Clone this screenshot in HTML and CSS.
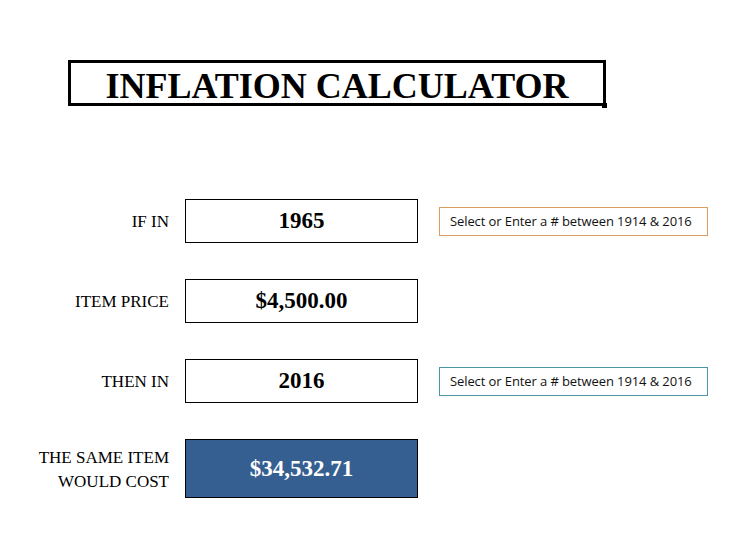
FILE: index.html
```html
<!DOCTYPE html>
<html lang="en">
<head>
    <meta charset="UTF-8">
    <title>Inflation Calculator</title>
    <link rel="stylesheet" href="styles.css">
</head>
<body>
    <div class="title-box">
        <h1>INFLATION CALCULATOR</h1>
        <span class="handle"></span>
    </div>

    <div class="calc">
        <div class="label">IF IN</div>
        <div class="cell">1965</div>
        <div class="hint hint-orange">Select or Enter a # between 1914 &amp; 2016</div>

        <div class="label">ITEM PRICE</div>
        <div class="cell">$4,500.00</div>
        <div></div>

        <div class="label">THEN IN</div>
        <div class="cell">2016</div>
        <div class="hint hint-teal">Select or Enter a # between 1914 &amp; 2016</div>

        <div class="label">THE SAME ITEM<br>WOULD COST</div>
        <div class="cell result">$34,532.71</div>
        <div></div>
    </div>
</body>
</html>
```

FILE: styles.css
```css
body {
    margin: 0;
    background: #fff;
    color: #000;
    font-family: "Liberation Serif", serif;
}
.title-box {
    position: relative;
    box-sizing: border-box;
    width: 538px;
    height: 46px;
    margin: 60px 0 0 68px;
    border: 3px solid #000;
    display: flex;
    align-items: center;
    justify-content: center;
}
.title-box h1 {
    margin: 5px 0 0 0;
    font-size: 36px;
    font-weight: bold;
    line-height: 40px;
}
.handle {
    position: absolute;
    right: -4px;
    bottom: -5px;
    width: 5px;
    height: 5px;
    background: #000;
}
.calc {
    display: grid;
    grid-template-columns: 169px 233px 274px;
    grid-template-rows: 44px 44px 44px 59px;
    column-gap: 16px;
    row-gap: 36px;
    margin-top: 93px;
}
.calc > div:nth-child(3n) {
    margin-left: 5px;
}
.label {
    display: flex;
    align-items: center;
    justify-content: flex-end;
    text-align: right;
    font-size: 17px;
    line-height: 24px;
    padding-top: 2px;
}
.cell {
    box-sizing: border-box;
    border: 1px solid #000;
    display: flex;
    align-items: center;
    justify-content: center;
    font-size: 23px;
    font-weight: bold;
}
.result {
    background: #365f91;
    color: #fff;
}
.hint {
    align-self: center;
    box-sizing: border-box;
    height: 29px;
    padding-left: 10px;
    display: flex;
    align-items: center;
    font-family: "Open Sans", sans-serif;
    font-size: 13px;
    letter-spacing: -0.1px;
    color: #111;
}
.hint-orange {
    border: 1px solid #dc9c62;
}
.hint-teal {
    border: 1px solid #4b95a6;
}
```
